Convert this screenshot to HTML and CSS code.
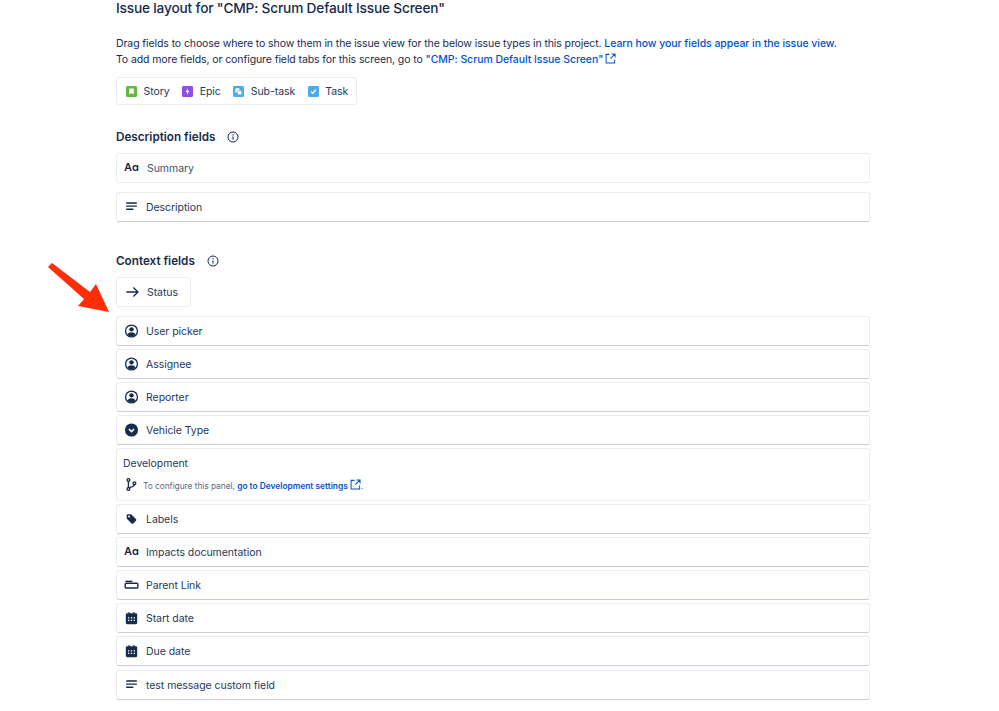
FILE: index.html
```html
<!DOCTYPE html>
<html lang="en">
<head>
    <meta charset="UTF-8">
    <meta name="viewport" content="width=device-width, initial-scale=1.0">
    <title>Issue layout</title>
    <link rel="stylesheet" href="styles.css">
</head>
<body>

    <svg width="0" height="0" class="defs">
        <symbol id="i-lines" viewBox="0 0 16 16">
            <path d="M2.500 3.500h11M2.500 7h11M2.500 10.500h7" fill="none" stroke="currentColor" stroke-width="1.600" stroke-linecap="round"/>
        </symbol>
        <symbol id="i-user" viewBox="0 0 16 16">
            <circle cx="8" cy="8" r="6.800" fill="none" stroke="currentColor" stroke-width="1.500"/>
            <circle cx="8" cy="6.100" r="2.500" fill="currentColor"/>
            <path d="M3.400 12.400c.6-2.300 2.300-3.100 4.600-3.100s4 .8 4.600 3.100A6.500 6.500 0 0 1 8 14.400a6.500 6.500 0 0 1-4.600-2z" fill="currentColor"/>
        </symbol>
        <symbol id="i-calendar" viewBox="0 0 16 16">
            <path fill-rule="evenodd" fill="currentColor" d="M3 2.500h1.500V1.200h1.300v1.300h4.400V1.200h1.300v1.300H13a1.500 1.500 0 0 1 1.500 1.500v9.500A1.500 1.500 0 0 1 13 15H3a1.500 1.500 0 0 1-1.500-1.500V4A1.500 1.500 0 0 1 3 2.500zM4 7v1.500h1.500V7zm3.200 0v1.500h1.600V7zm3.300 0v1.500H12V7zM4 10v1.500h1.500V10zm3.200 0v1.500h1.600V10zm3.300 0v1.500H12V10z"/>
        </symbol>
        <symbol id="i-external" viewBox="0 0 12 12">
            <path d="M5 1.500H1.200v9.300h9.300V7M7 1h4v4M11 1 5.800 6.200" fill="none" stroke="currentColor" stroke-width="1.100"/>
        </symbol>
    </svg>

    <!-- Red arrow drawn over the page -->
    <svg class="arrow" width="70" height="60" viewBox="0 0 70 60">
        <path d="M7 3 45 32 51 24 64 52 33 46 39 39 3 7z" fill="#ff2e0a"/>
    </svg>

    <div class="page">
        <h1 class="page-title">Issue layout for "CMP: Scrum Default Issue Screen"</h1>

        <p class="intro">
            Drag fields to choose where to show them in the issue view for the below issue types in this project.
            <a href="#">Learn how your fields appear in the issue view.</a><br>
            To add more fields, or configure field tabs for this screen, go to
            <a href="#">"CMP: Scrum Default Issue Screen"<svg class="ext"><use href="#i-external"/></svg></a>
        </p>

        <div class="types">
            <span class="type">
                <svg class="type-icon" viewBox="0 0 12 12"><rect width="12" height="12" rx="1.500" fill="#63ba3c"/><path d="M3.500 2.800h5v6.500L6 7.600 3.500 9.300z" fill="#fff"/></svg>
                Story
            </span>
            <span class="type">
                <svg class="type-icon" viewBox="0 0 12 12"><rect width="12" height="12" rx="1.500" fill="#904ee2"/><path d="M6.600 2.500 3.800 6.600h1.900L5.300 9.500l2.900-4.100H6.300z" fill="#fff"/></svg>
                Epic
            </span>
            <span class="type">
                <svg class="type-icon" viewBox="0 0 12 12"><rect width="12" height="12" rx="1.500" fill="#4bade8"/><rect x="2.500" y="2.500" width="4.500" height="4.500" rx=".8" fill="#fff"/><rect x="5" y="5" width="4.500" height="4.500" rx=".8" fill="#fff" stroke="#4bade8" stroke-width=".7"/></svg>
                Sub-task
            </span>
            <span class="type">
                <svg class="type-icon" viewBox="0 0 12 12"><rect width="12" height="12" rx="1.500" fill="#4bade8"/><path d="M3.300 6.200 5.200 8l3.500-4" fill="none" stroke="#fff" stroke-width="1.500"/></svg>
                Task
            </span>
        </div>

        <h2 class="section-title section-first">Description fields <svg class="info" viewBox="0 0 12 12"><circle cx="6" cy="6" r="5" fill="none" stroke="currentColor"/><path d="M6 5.400v3M6 3.200v1.200" stroke="currentColor" stroke-width="1.100"/></svg></h2>
        <div class="field field-plain"><span class="field-icon aa">Aɑ</span><span class="summary-label">Summary</span></div>
        <div class="field field-desc"><svg class="field-icon"><use href="#i-lines"/></svg>Description</div>

        <h2 class="section-title section-context">Context fields <svg class="info" viewBox="0 0 12 12"><circle cx="6" cy="6" r="5" fill="none" stroke="currentColor"/><path d="M6 5.400v3M6 3.200v1.200" stroke="currentColor" stroke-width="1.100"/></svg></h2>
        <div class="status">
            <svg class="field-icon" viewBox="0 0 16 16"><path d="M1 8h13.500M9 2.800 14.300 8 9 13.200" fill="none" stroke="currentColor" stroke-width="1.500"/></svg>
            Status
        </div>

        <div class="field-list">
            <div class="field"><svg class="field-icon"><use href="#i-user"/></svg>User picker</div>
            <div class="field"><svg class="field-icon"><use href="#i-user"/></svg>Assignee</div>
            <div class="field"><svg class="field-icon"><use href="#i-user"/></svg>Reporter</div>
            <div class="field">
                <svg class="field-icon" viewBox="0 0 16 16"><circle cx="8" cy="8" r="7.500" fill="currentColor"/><path d="M5 6.800 8 9.800l3-3" fill="none" stroke="#fff" stroke-width="1.700"/></svg>
                Vehicle Type
            </div>
            <div class="panel">
                <div class="panel-title">Development</div>
                <div class="panel-note">
                    <svg class="branch" viewBox="0 0 14 16"><g fill="none" stroke="currentColor" stroke-width="1.600"><circle cx="4" cy="2.800" r="1.600"/><circle cx="4" cy="13.200" r="1.600"/><circle cx="11" cy="6.500" r="1.600"/><path d="M4 4.400v7.200M11 8.100c0 2-2.500 2.900-6 3.600"/></g></svg>
                    <span>To configure this panel, <a href="#">go to Development settings<svg class="ext"><use href="#i-external"/></svg></a>.</span>
                </div>
            </div>
            <div class="field">
                <svg class="field-icon" viewBox="0 0 16 16"><path fill-rule="evenodd" fill="currentColor" d="M2.500 3.500 3.500 2.500h4l5.600 5.500a1.400 1.400 0 0 1 0 2L10 13a1.400 1.400 0 0 1-2 0L2.500 7.500zM5.200 6.200a1.100 1.100 0 1 0 0-2.200 1.100 1.100 0 0 0 0 2.200z"/></svg>
                Labels
            </div>
            <div class="field"><span class="field-icon aa">Aɑ</span>Impacts documentation</div>
            <div class="field">
                <svg class="field-icon" viewBox="0 0 16 16"><path d="M1 3.800h8" stroke="currentColor" stroke-width="1.500" fill="none"/><rect x=".8" y="6" width="14.400" height="5.500" rx="1" fill="none" stroke="currentColor" stroke-width="1.600"/></svg>
                Parent Link
            </div>
            <div class="field"><svg class="field-icon"><use href="#i-calendar"/></svg>Start date</div>
            <div class="field"><svg class="field-icon"><use href="#i-calendar"/></svg>Due date</div>
            <div class="field field-last"><svg class="field-icon"><use href="#i-lines"/></svg>test message custom field</div>
        </div>
    </div>

</body>
</html>
```

FILE: styles.css
```css
/* Basic Styling */
html, body {
    height: 100%;
    overflow: hidden;
}

body {
    font-family: Inter, "Liberation Sans", sans-serif;
    font-size: 10.500px;
    letter-spacing: -0.05px;
    background-color: white;
    color: #172b4d;
    margin: 0;
    padding: 0;
    position: relative;
}

a {
    color: #0052cc;
    font-weight: 500;
    letter-spacing: -0.05px;
    text-decoration: none;
}

.defs {
    position: absolute;
}

.arrow {
    position: absolute;
    left: 45px;
    top: 260px;
}

.page {
    width: 754px;
    margin-left: 116px;
}

.page-title {
    font-size: 13.700px;
    font-weight: 500;
    letter-spacing: -0.180px;
    line-height: 16px;
    margin: 0;
}

.intro {
    letter-spacing: -0.100px;
    line-height: 15.500px;
    margin: 20px 0 0;
}

.ext {
    width: 11px;
    height: 11px;
    margin-left: 2px;
    vertical-align: -1px;
}

.types {
    display: inline-flex;
    gap: 12.500px;
    align-items: center;
    height: 26px;
    padding: 0 8px 0 9px;
    margin-top: 10px;
    border: 1px solid #ebecf0;
    border-radius: 3px;
    color: #253858;
}

.type {
    display: flex;
    align-items: center;
    gap: 6.500px;
}

.type-icon {
    width: 11px;
    height: 11px;
}

.section-title {
    font-size: 11.700px;
    font-weight: 600;
    letter-spacing: 0;
    line-height: 16px;
    margin: 0;
    display: flex;
    align-items: center;
    gap: 12px;
}

.section-first {
    margin-top: 24px;
}

.section-context {
    margin-top: 31px;
}

.info {
    width: 12px;
    height: 12px;
}

.field-list {
    display: flex;
    flex-direction: column;
    gap: 3px;
    margin-top: 9px;
}

.field {
    display: flex;
    align-items: center;
    gap: 7px;
    height: 30px;
    box-sizing: border-box;
    padding: 0 0 0 7px;
    background-color: white;
    border: 1px solid #ebecf0;
    border-bottom-color: #c9ced8;
    border-radius: 3px;
    color: #253858;
}

.field-plain {
    margin-top: 8px;
    gap: 8px;
    border-bottom-color: #ebecf0;
}

.summary-label {
    color: #42526e;
}

.field-desc {
    margin-top: 9px;
}

.field-icon {
    width: 15px;
    height: 14px;
    flex-shrink: 0;
    color: #172b4d;
}

.aa {
    font-size: 11px;
    font-weight: 600;
    line-height: 12px;
    letter-spacing: 0;
}

.field-last {
    margin-top: 1px;
}

.status {
    display: inline-flex;
    align-items: center;
    gap: 7px;
    width: 75px;
    height: 30px;
    box-sizing: border-box;
    padding-left: 8px;
    margin-top: 8px;
    border: 1px solid #ebecf0;
    border-radius: 3px;
    color: #253858;
    vertical-align: top;
}

.panel {
    height: 53px;
    box-sizing: border-box;
    padding: 8px 6px 0;
    border: 1px solid #ebecf0;
    border-radius: 3px;
    color: #253858;
}

.panel-note {
    display: flex;
    align-items: center;
    gap: 6px;
    margin: 7px 0 0 2px;
    font-size: 8.400px;
    color: #5e6c84;
}

.panel-note a {
    font-weight: 600;
    letter-spacing: 0;
}

.branch {
    width: 12px;
    height: 15px;
    color: #172b4d;
}
```
